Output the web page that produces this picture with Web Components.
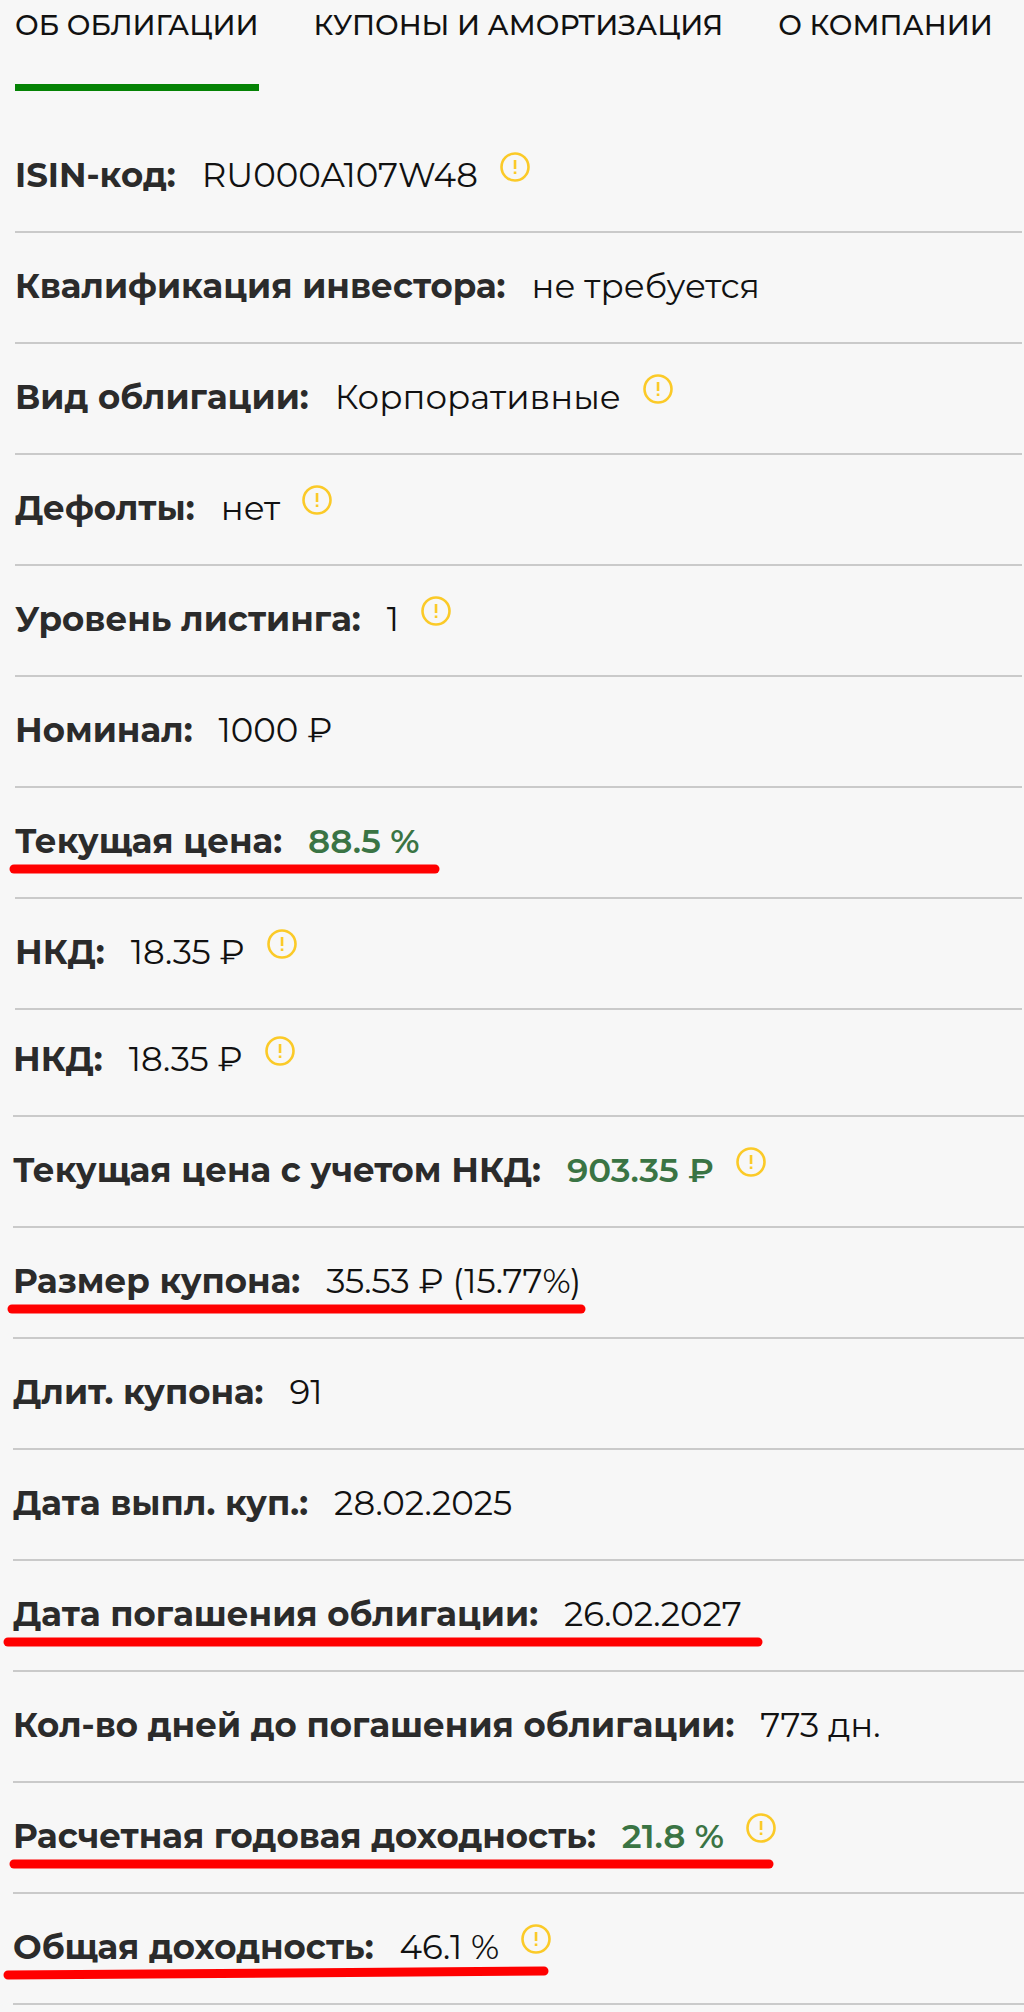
<!DOCTYPE html>
<html lang="ru">
<head>
  <meta charset="utf-8">
  <meta name="viewport" content="width=device-width, initial-scale=1">
  <title>Об облигации</title>
  <style>
    body {
      margin: 0;
      background: #f7f7f7;
      color: #111;
      font-family: Montserrat, Inter, sans-serif;
    }
  </style>
</head>
<body>
  <bond-tabs>
    <bond-tab href="#bond" active>ОБ ОБЛИГАЦИИ</bond-tab>
    <bond-tab href="#coupons">КУПОНЫ И АМОРТИЗАЦИЯ</bond-tab>
    <bond-tab href="#company">О КОМПАНИИ</bond-tab>
  </bond-tabs>

  <bond-list id="bond">
    <bond-row label="ISIN-код:" hint>RU000A107W48</bond-row>
    <bond-row label="Квалификация инвестора:">не требуется</bond-row>
    <bond-row label="Вид облигации:" hint>Корпоративные</bond-row>
    <bond-row label="Дефолты:" hint>нет</bond-row>
    <bond-row label="Уровень листинга:" hint>1</bond-row>
    <bond-row label="Номинал:">1000 ₽</bond-row>
    <bond-row label="Текущая цена:" accent><pen-line slot="mark" start="10" end="439"></pen-line>88.5 %</bond-row>
    <bond-row label="НКД:" hint>18.35 ₽</bond-row>
  </bond-list>

  <bond-list wide>
    <bond-row label="НКД:" hint>18.35 ₽</bond-row>
    <bond-row label="Текущая цена с учетом НКД:" accent hint>903.35 ₽</bond-row>
    <bond-row label="Размер купона:"><pen-line slot="mark" start="8" end="585"></pen-line>35.53 ₽ (15.77%)</bond-row>
    <bond-row label="Длит. купона:">91</bond-row>
    <bond-row label="Дата выпл. куп.:">28.02.2025</bond-row>
    <bond-row label="Дата погашения облигации:"><pen-line slot="mark" start="4" end="762"></pen-line>26.02.2027</bond-row>
    <bond-row label="Кол-во дней до погашения облигации:">773 дн.</bond-row>
    <bond-row label="Расчетная годовая доходность:" accent hint><pen-line slot="mark" start="10" end="773"></pen-line>21.8 %</bond-row>
    <bond-row label="Общая доходность:" hint><pen-line slot="mark" start="4" end="548" rise="4"></pen-line>46.1 %</bond-row>
  </bond-list>

  <script>
    /**
     * The navigation bar that holds the tabs.
     */
    customElements.define('bond-tabs',
      class extends HTMLElement {
        constructor () {
          super()

          this.attachShadow({ mode: 'open' }).innerHTML = `
            <style>
              :host {
                display: block;
              }

              nav {
                display: flex;
                gap: 55px;
                padding: 0 15px;
              }
            </style>
            <nav><slot></slot></nav>
          `
        }
      }
    )

    /**
     * One tab, with a green bar below it when active.
     */
    customElements.define('bond-tab',
      class extends HTMLElement {
        constructor () {
          super()

          this.attachShadow({ mode: 'open' }).innerHTML = `
            <style>
              :host {
                display: block;
              }

              a {
                display: block;
                box-sizing: border-box;
                height: 91px;
                padding-top: 8px;
                border-bottom: 7px solid transparent;
                color: #111;
                font-size: 28px;
                font-weight: 500;
                line-height: 34px;
                text-decoration: none;
                white-space: nowrap;
              }

              :host([active]) a {
                border-bottom-color: #058305;
              }
            </style>
            <a><slot></slot></a>
          `
        }

        connectedCallback () {
          this.shadowRoot.querySelector('a').href = this.getAttribute('href')
        }
      }
    )

    /**
     * A block of rows.
     */
    customElements.define('bond-list',
      class extends HTMLElement {
        constructor () {
          super()

          this.attachShadow({ mode: 'open' }).innerHTML = `
            <style>
              :host {
                --inset: 15px;
                display: block;
                padding: 31px 2px 0 var(--inset);
              }

              :host([wide]) {
                --inset: 13px;
                padding-top: 0;
                padding-right: 0;
                margin-top: -4px;
              }
            </style>
            <slot></slot>
          `
        }
      }
    )

    /**
     * A label with its value and, optionally, a hint button.
     */
    customElements.define('bond-row',
      class extends HTMLElement {
        constructor () {
          super()

          this.attachShadow({ mode: 'open' }).innerHTML = `
            <style>
              :host {
                display: flex;
                position: relative;
                box-sizing: border-box;
                height: 111px;
                padding-top: 32px;
                border-bottom: 2px solid #cacaca;
                font-size: 34px;
                line-height: 42px;
                white-space: nowrap;
              }

              b {
                margin-right: 26px;
                color: #2b2b2b;
                font-weight: 700;
              }

              :host([accent]) .value {
                color: #3a7444;
                font-weight: 600;
              }

              bond-hint {
                margin: -2px 0 0 22px;
              }

              :host(:not([hint])) bond-hint {
                display: none;
              }
            </style>
            <b></b>
            <span class="value"><slot></slot></span>
            <bond-hint></bond-hint>
            <slot name="mark"></slot>
          `
        }

        connectedCallback () {
          this.shadowRoot.querySelector('b').textContent = this.getAttribute('label')
        }
      }
    )

    /**
     * The yellow exclamation mark button.
     */
    customElements.define('bond-hint',
      class extends HTMLElement {
        constructor () {
          super()

          this.attachShadow({ mode: 'open' }).innerHTML = `
            <style>
              :host {
                display: block;
              }

              button {
                display: block;
                padding: 0;
                border: 0;
                background: none;
                cursor: pointer;
              }

              svg {
                display: block;
              }
            </style>
            <button type="button" aria-label="Подсказка">
              <svg width="30" height="30" viewBox="0 0 30 30" fill="none" stroke="#fbca28">
                <circle cx="15" cy="15" r="13.5" stroke-width="2.6"/>
                <path d="M15 8v9M15 19.5v2.5" stroke-width="2.6"/>
              </svg>
            </button>
          `
        }
      }
    )

    /**
     * A red pen stroke over a row, from start to end on the page.
     */
    customElements.define('pen-line',
      class extends HTMLElement {
        constructor () {
          super()

          this.attachShadow({ mode: 'open' }).innerHTML = `
            <style>
              :host {
                display: block;
                position: absolute;
                left: calc(0px - var(--inset));
                top: 71px;
                pointer-events: none;
              }

              svg {
                display: block;
                overflow: visible;
              }
            </style>
            <svg height="20" fill="none" stroke="#f00" stroke-width="9" stroke-linecap="round">
              <path/>
            </svg>
          `
        }

        connectedCallback () {
          const start = Number(this.getAttribute('start')) + 4
          const end = Number(this.getAttribute('end')) - 4
          const rise = Number(this.getAttribute('rise') || 0)

          this.shadowRoot.querySelector('svg').setAttribute('width', end)
          this.shadowRoot.querySelector('path').setAttribute('d', `M${start} 10L${end} ${10 - rise}`)
        }
      }
    )
  </script>
</body>
</html>
